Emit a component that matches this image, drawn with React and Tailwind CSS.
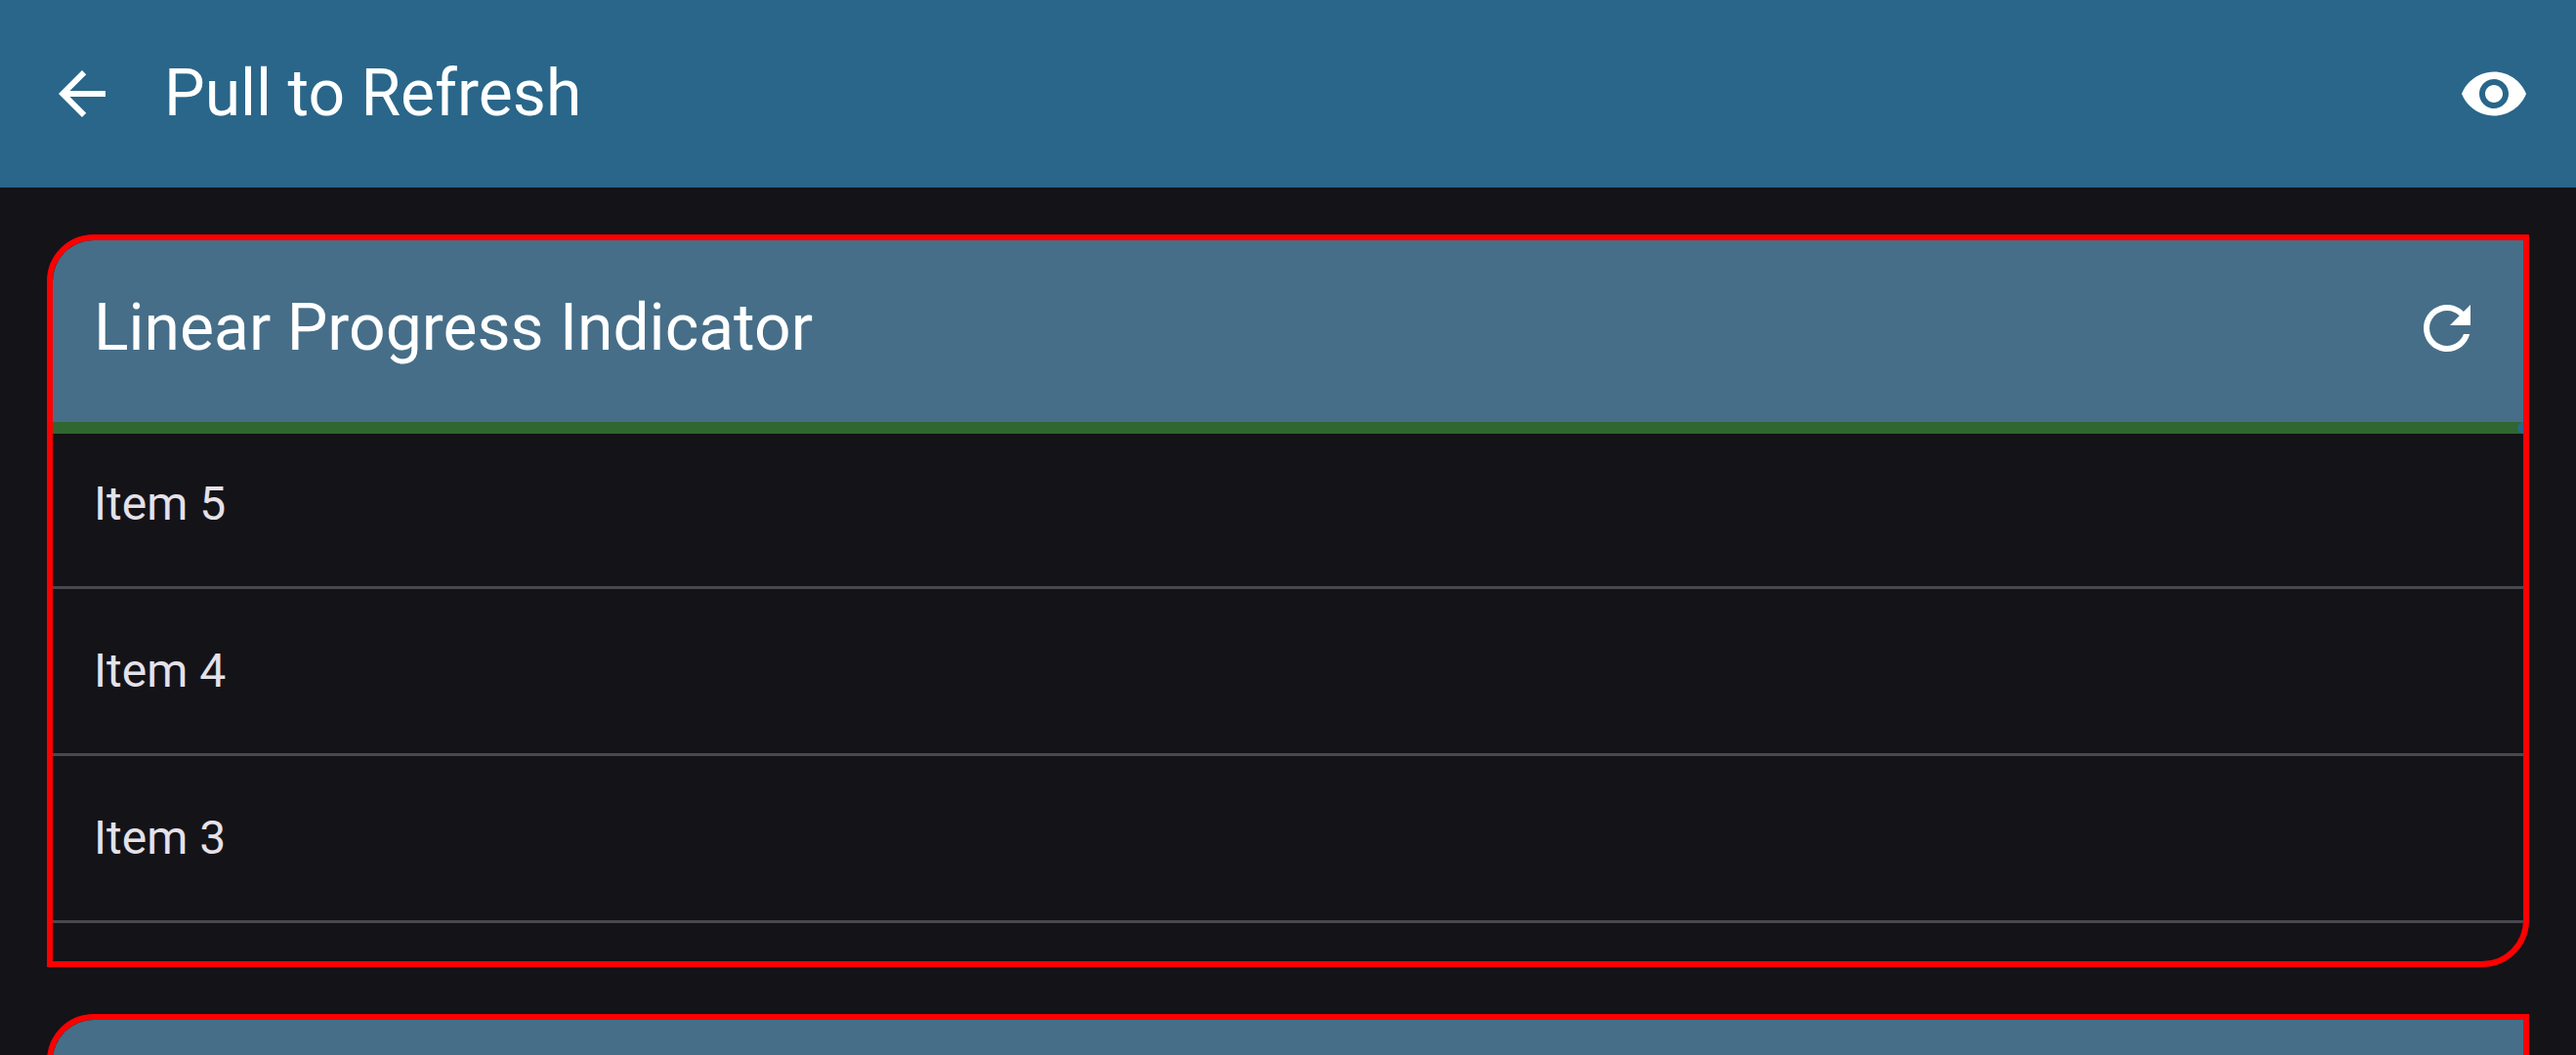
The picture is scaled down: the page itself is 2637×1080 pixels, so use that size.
import React from "react";

function Icon({ d }) {
  return (
    <svg viewBox="0 0 24 24" className="size-[72px] fill-current" aria-hidden="true">
      <path d={d} />
    </svg>
  );
}

const ARROW_BACK = "M20 11H7.83l5.59-5.59L12 4l-8 8 8 8 1.41-1.41L7.83 13H20v-2z";
const EYE =
  "M12 4.5C7 4.5 2.73 7.61 1 12c1.73 4.39 6 7.5 11 7.5s9.27-3.11 11-7.5c-1.73-4.39-6-7.5-11-7.5zM12 17c-2.76 0-5-2.24-5-5s2.24-5 5-5 5 2.24 5 5-2.24 5-5 5zm0-8c-1.66 0-3 1.34-3 3s1.34 3 3 3 3-1.34 3-3-1.34-3-3-3z";
const REFRESH =
  "M17.65 6.35C16.2 4.9 14.21 4 12 4c-4.42 0-7.99 3.58-7.99 8s3.57 8 7.99 8c3.73 0 6.84-2.55 7.73-6h-2.08c-.82 2.33-3.04 4-5.65 4-3.31 0-6-2.69-6-6s2.69-6 6-6c1.66 0 3.14.69 4.22 1.78L13 11h7V4l-2.35 2.35z";

function Card({ title, items }) {
  return (
    <section className="overflow-hidden rounded-tl-[48px] rounded-br-[48px] border-6 border-[#ff0000] bg-[#141318]">
      <header className="flex h-[186px] items-center justify-between bg-[#466e88] pb-1.5 pr-[42px] pl-[42px]">
        <h2 className="text-[66px] leading-[84px]">{title}</h2>
        <button type="button" aria-label="Refresh">
          <Icon d={REFRESH} />
        </button>
      </header>
      {items.length > 0 && (
        <div className="relative">
          <div
            role="progressbar"
            aria-label="Loading"
            className="absolute inset-x-0 top-0 flex h-3 justify-end bg-[#30662f]"
          >
            <svg viewBox="0 0 6 12" className="h-3 w-1.5 fill-[#2a6689]" aria-hidden="true">
              <path d="M6 0A6 6 0 0 0 6 12z" />
            </svg>
          </div>
          <ul className="pb-[39px]">
            {items.map((item) => (
              <li
                key={item}
                className="flex h-[171px] items-center border-b-3 border-[#49484e] px-[42px] text-[48px] leading-[72px] text-[#e5e1e9]"
              >
                {item}
              </li>
            ))}
          </ul>
        </div>
      )}
    </section>
  );
}

export default function App() {
  return (
    <div className="flex h-screen flex-col overflow-hidden bg-[#141318] font-[Roboto,sans-serif] text-white">
      <header className="flex h-[192px] shrink-0 items-center gap-12 bg-[#296689] px-12">
        <button type="button" aria-label="Back">
          <Icon d={ARROW_BACK} />
        </button>
        <h1 className="flex-1 text-[66px] leading-[84px]">Pull to Refresh</h1>
        <button type="button" aria-label="Show">
          <Icon d={EYE} />
        </button>
      </header>
      <main className="min-h-0 flex-1 space-y-12 overflow-hidden p-12">
        <Card title="Linear Progress Indicator" items={["Item 5", "Item 4", "Item 3"]} />
        <Card title="" items={[]} />
      </main>
    </div>
  );
}
